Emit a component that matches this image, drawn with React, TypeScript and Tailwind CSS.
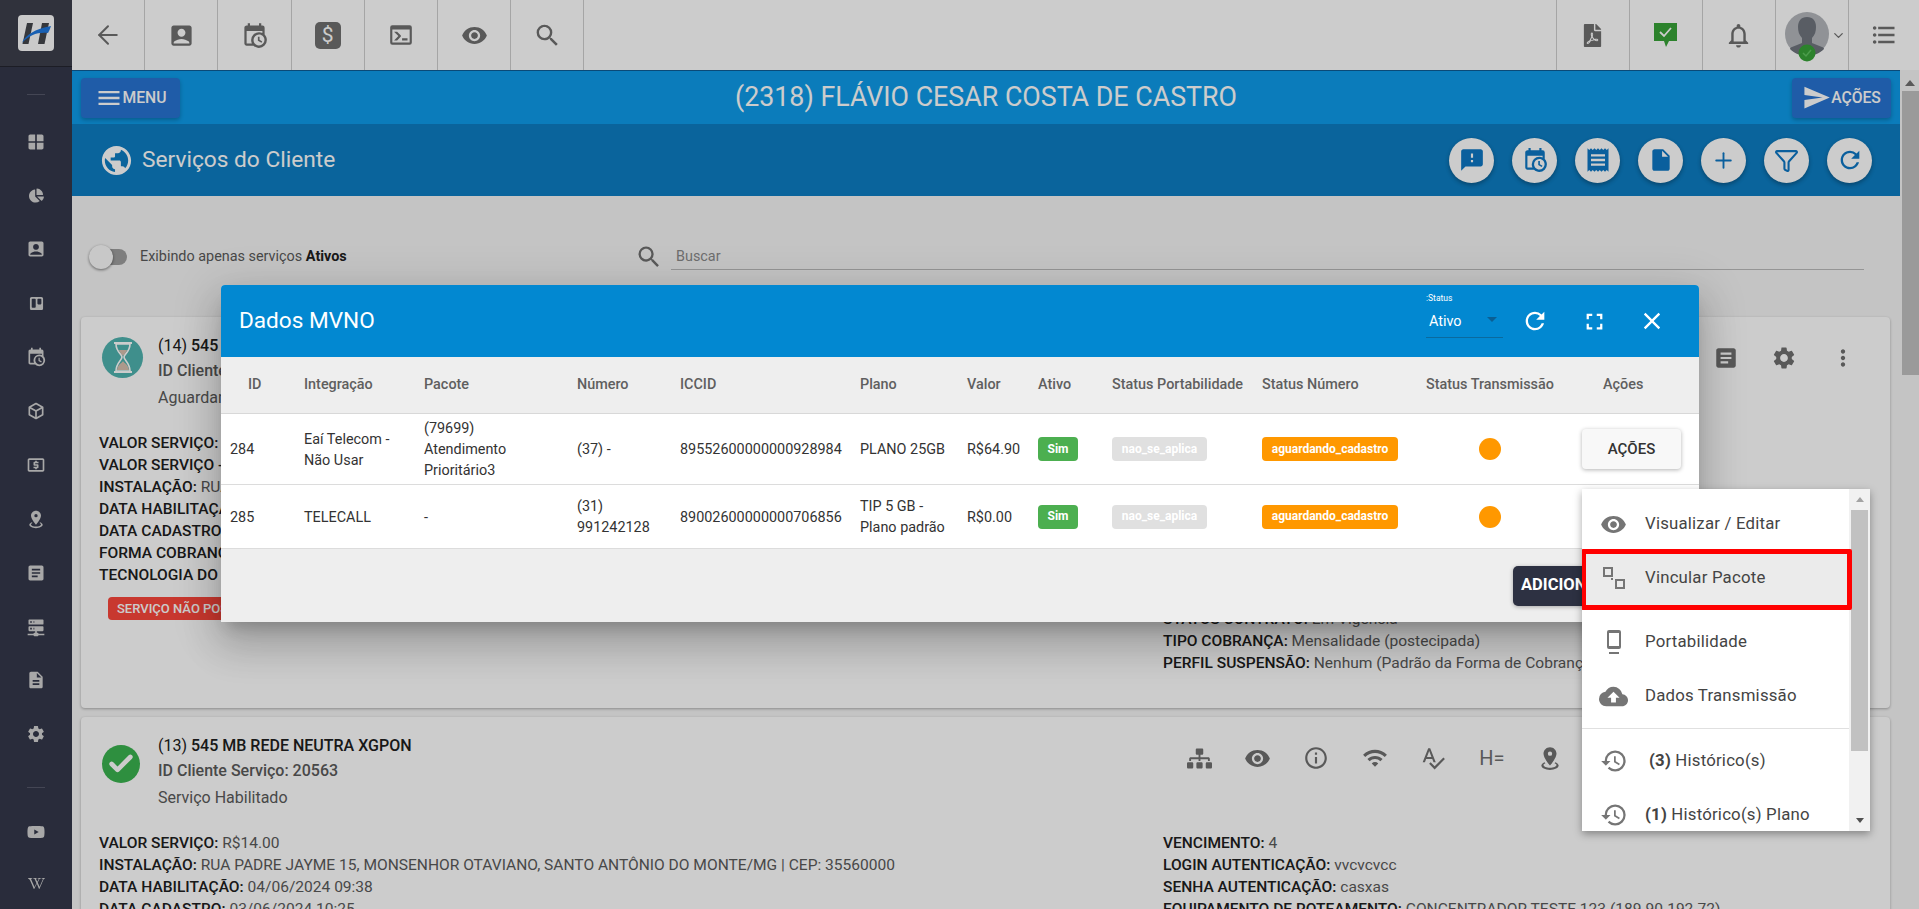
import type { ReactNode } from "react";
import { ArrowLeft, Check, ChevronDown, Filter, Plus } from "lucide-react";
import { FaChartPie, FaFilePdf, FaRegFolderOpen, FaSitemap, FaTrello, FaWikipediaW, FaYoutube } from "react-icons/fa";
import {
  MdAccountBox,
  MdArticle,
  MdClose,
  MdCloudUpload,
  MdDescription,
  MdFeedback,
  MdFormatListBulleted,
  MdFullscreen,
  MdHistory,
  MdInfoOutline,
  MdInsertDriveFile,
  MdLocalAtm,
  MdMenu,
  MdMoreVert,
  MdNotificationsNone,
  MdPublic,
  MdReceipt,
  MdRefresh,
  MdSearch,
  MdSend,
  MdSettings,
  MdSpellcheck,
  MdVisibility,
  MdWifi,
  MdWindow,
} from "react-icons/md";

const CALENDAR_CLOCK =
  "M15,13H16.5V15.82L18.94,17.23L18.19,18.53L15,16.69V13M19,8H5V19H9.67C9.24,18.09 9,17.07 9,16A7,7 0 0,1 16,9C17.07,9 18.09,9.24 19,9.67V8M5,21C3.89,21 3,20.1 3,19V5C3,3.89 3.89,3 5,3H6V1H8V3H16V1H18V3H19A2,2 0 0,1 21,5V11.1C22.24,12.36 23,14.09 23,16A7,7 0 0,1 16,23C14.09,23 12.36,22.24 11.1,21H5M16,11.15A4.85,4.85 0 0,0 11.15,16C11.15,18.68 13.32,20.85 16,20.85A4.85,4.85 0 0,0 20.85,16C20.85,13.32 18.68,11.15 16,11.15Z";
const MAP_RADIUS =
  "M12,2C15.31,2 18,4.66 18,7.95C18,12.41 12,19 12,19C12,19 6,12.41 6,7.95C6,4.66 8.69,2 12,2M12,6A2,2 0 0,0 10,8A2,2 0 0,0 12,10A2,2 0 0,0 14,8A2,2 0 0,0 12,6M20,19C20,21.21 16.42,23 12,23C7.58,23 4,21.21 4,19C4,17.71 5.22,16.56 7.11,15.83L7.75,16.74C6.67,17.19 6,17.81 6,18.5C6,19.88 8.69,21 12,21C15.31,21 18,19.88 18,18.5C18,17.81 17.33,17.19 16.25,16.74L16.89,15.83C18.78,16.56 20,17.71 20,19Z";
const CONSOLE =
  "M20,19V7H4V19H20M20,3A2,2 0 0,1 22,5V19A2,2 0 0,1 20,21H4A2,2 0 0,1 2,19V5A2,2 0 0,1 4,3H20M13,17V15H18V17H13M9.58,13L5.57,9H8.4L11.7,12.3C12.09,12.69 12.09,13.33 11.7,13.72L8.42,17H5.59L9.58,13Z";
const SERVER =
  "M13,19H14A1,1 0 0,1 15,20H22V22H15A1,1 0 0,1 14,23H10A1,1 0 0,1 9,22H2V20H9A1,1 0 0,1 10,19H11V17H4A1,1 0 0,1 3,16V12A1,1 0 0,1 4,11H20A1,1 0 0,1 21,12V16A1,1 0 0,1 20,17H13V19M4,3H20A1,1 0 0,1 21,4V8A1,1 0 0,1 20,9H4A1,1 0 0,1 3,8V4A1,1 0 0,1 4,3M9,7H10V5H9V7M9,15H10V13H9V15M5,5V7H7V5H5M5,13V15H7V13H5Z";
const CUBE =
  "M21,16.5C21,16.88 20.79,17.21 20.47,17.38L12.57,21.82C12.41,21.94 12.21,22 12,22C11.79,22 11.59,21.94 11.43,21.82L3.53,17.38C3.21,17.21 3,16.88 3,16.5V7.5C3,7.12 3.21,6.79 3.53,6.62L11.43,2.18C11.59,2.06 11.79,2 12,2C12.21,2 12.41,2.06 12.57,2.18L20.47,6.62C20.79,6.79 21,7.12 21,7.5V16.5M12,4.15L6.04,7.5L12,10.85L17.96,7.5L12,4.15M5,15.91L11,19.29V12.58L5,9.21V15.91M19,15.91V9.21L13,12.58V19.29L19,15.91Z";

function Mdi({ d, size = 24 }: { d: string; size?: number }) {
  return (
    <svg width={size} height={size} viewBox="0 0 24 24" fill="currentColor">
      <path d={d} />
    </svg>
  );
}

const SIDE_ICONS = [
  <MdWindow size={20} />,
  <FaChartPie size={15} />,
  <MdAccountBox size={20} />,
  <FaTrello size={15} />,
  <Mdi d={CALENDAR_CLOCK} size={20} />,
  <Mdi d={CUBE} size={20} />,
  <MdLocalAtm size={20} />,
  <Mdi d={MAP_RADIUS} size={20} />,
  <MdArticle size={20} />,
  <Mdi d={SERVER} size={20} />,
  <MdDescription size={20} />,
  <MdSettings size={20} />,
];

function Sidebar() {
  return (
    <aside className="flex w-[72px] shrink-0 flex-col items-center bg-[#34384a] text-[#d2d2d2]">
      <div className="flex h-[70px] w-full items-center justify-center border-b border-[#23252f] bg-[#3c3f4b]">
        <svg width="36" height="36" viewBox="0 0 36 36">
          <rect width="36" height="36" rx="4" fill="#fdfdfd" />
          <path d="M9 8h6l-4.5 21H4.5z" fill="#44464c" />
          <path d="M24 8h7l-4.5 21h-6.5z" fill="#44464c" />
          <path d="M4 28C7 20 17 14 33 11c-1 3-2 5-3 7-10-1-19 2-26 10z" fill="#1f78e0" />
        </svg>
      </div>
      <div className="mt-[27px] h-px w-[18px] bg-[#55586a]" />
      <div className="mt-[20px] flex w-full flex-col items-center">
        {SIDE_ICONS.map((icon, i) => (
          <div key={i} className="flex h-[53.9px] w-full items-center justify-center">
            {icon}
          </div>
        ))}
      </div>
      <div className="mt-[26px] h-px w-[18px] bg-[#55586a]" />
      <div className="mt-[18px] flex h-[54px] items-center justify-center">
        <FaYoutube size={18} />
      </div>
      <div className="flex h-[54px] items-center justify-center">
        <FaWikipediaW size={17} />
      </div>
    </aside>
  );
}

function ToolItem({ children }: { children: ReactNode }) {
  return (
    <div className="flex h-full w-[73.2px] items-center justify-center border-r border-[#cfcfcf] text-[#707070]">
      {children}
    </div>
  );
}

function Topbar() {
  return (
    <header className="flex h-[70px] shrink-0 items-center justify-between bg-white">
      <div className="flex h-full">
        <ToolItem>
          <ArrowLeft size={30} strokeWidth={1.6} />
        </ToolItem>
        <ToolItem>
          <MdAccountBox size={27} />
        </ToolItem>
        <ToolItem>
          <Mdi d={CALENDAR_CLOCK} size={27} />
        </ToolItem>
        <ToolItem>
          <div className="flex h-[27px] w-[26px] items-center justify-center rounded-[5px] bg-[#707070] text-[21px] leading-none text-white">
            $
          </div>
        </ToolItem>
        <ToolItem>
          <Mdi d={CONSOLE} size={26} />
        </ToolItem>
        <ToolItem>
          <MdVisibility size={27} />
        </ToolItem>
        <ToolItem>
          <MdSearch size={29} />
        </ToolItem>
      </div>
      <div className="flex h-full">
        <div className="flex h-full w-[74px] items-center justify-center border-x border-[#cfcfcf] text-[#707070]">
          <FaFilePdf size={23} />
        </div>
        <ToolItem>
          <svg width="23" height="24" viewBox="0 0 23 24">
            <path d="M0 0h23v18h-8l-3 6-2-6H0z" fill="#37a337" />
            <path d="M6 9l4 4 7-8" fill="none" stroke="#fff" strokeWidth="1.8" />
          </svg>
        </ToolItem>
        <ToolItem>
          <MdNotificationsNone size={29} />
        </ToolItem>
        <div className="relative flex h-full w-[73px] items-center border-r border-[#cfcfcf] pl-[8px] text-[#707070]">
          <svg width="46" height="50" viewBox="0 0 46 50" className="mt-[4px]">
            <circle cx="23" cy="22" r="22" fill="#b4b7bc" />
            <path
              d="M23 5c6 0 9 4 9 10 0 4-1 8-4 11v5l10 4c1 0 2 1 2 2-4 4-10 7-17 7s-13-3-17-7c0-1 1-2 2-2l10-4v-5c-3-3-4-7-4-11 0-6 3-10 9-10z"
              fill="#70757e"
            />
            <circle cx="23" cy="41" r="8.5" fill="#37a337" />
            <path d="M19 41l3 3 5-6" fill="none" stroke="#5fc45f" strokeWidth="1.5" />
          </svg>
          <ChevronDown size={15} className="ml-[1px]" />
        </div>
        <div className="flex h-full w-[70px] items-center justify-center text-[#707070]">
          <MdFormatListBulleted size={28} />
        </div>
      </div>
    </header>
  );
}

function HeaderButton({ icon, label }: { icon: ReactNode; label: string }) {
  return (
    <div className="flex h-10 w-[99px] items-center justify-center rounded bg-[#2774d2] text-[15.7px] font-medium text-white shadow-[0_2px_4px_rgba(0,0,0,0.25)]">
      {icon}
      {label}
    </div>
  );
}

function RoundButton({ children }: { children: ReactNode }) {
  return (
    <div className="flex h-[45px] w-[45px] items-center justify-center rounded-full bg-white text-[#0d77c5] shadow-[0_2px_4px_rgba(0,0,0,0.3)]">
      {children}
    </div>
  );
}

function Hero() {
  return (
    <>
      <div className="flex h-[54px] shrink-0 items-center justify-between border-t border-[#0d5d96] bg-[#0e9cea] px-[9px]">
        <HeaderButton icon={<MdMenu size={28} />} label="MENU" />
        <div className="text-[26.8px] text-white">(2318) FLÁVIO CESAR COSTA DE CASTRO</div>
        <HeaderButton icon={<MdSend size={29} />} label="AÇÕES" />
      </div>
      <div className="flex h-[72px] shrink-0 items-center justify-between bg-[#0d7dc3] pl-[27px] pr-[28px]">
        <div className="flex items-center gap-[8px] text-white">
          <MdPublic size={35} />
          <span className="text-[22.7px] leading-[30px]">Serviços do Cliente</span>
        </div>
        <div className="flex gap-[18px]">
          <RoundButton>
            <MdFeedback size={26} />
          </RoundButton>
          <RoundButton>
            <Mdi d={CALENDAR_CLOCK} size={26} />
          </RoundButton>
          <RoundButton>
            <MdReceipt size={28} />
          </RoundButton>
          <RoundButton>
            <MdInsertDriveFile size={26} />
          </RoundButton>
          <RoundButton>
            <Plus size={25} strokeWidth={1.8} />
          </RoundButton>
          <RoundButton>
            <Filter size={25} strokeWidth={2} />
          </RoundButton>
          <RoundButton>
            <MdRefresh size={28} />
          </RoundButton>
        </div>
      </div>
    </>
  );
}

function Line({ label, children }: { label: string; children?: ReactNode }) {
  return (
    <div className="whitespace-nowrap">
      <span className="font-medium text-[#202020]">{label}:</span> {children}
    </div>
  );
}

function CardIcons() {
  return (
    <div className="flex text-[#707070]">
      {[
        <FaSitemap size={25} />,
        <MdVisibility size={27} />,
        <MdInfoOutline size={26} />,
        <MdWifi size={26} />,
        <MdSpellcheck size={26} />,
        <span className="text-[20px]">H=</span>,
        <Mdi d={MAP_RADIUS} size={26} />,
        <MdFullscreen size={26} />,
        <FaRegFolderOpen size={22} />,
        <MdArticle size={26} />,
        <MdSettings size={26} />,
        <MdMoreVert size={26} />,
      ].map((icon, i) => (
        <div key={i} className="flex h-[40px] w-[58.5px] items-center justify-center">
          {icon}
        </div>
      ))}
    </div>
  );
}

function ServiceCard({
  icon,
  title,
  code,
  status,
  left,
  right,
  height,
}: {
  icon: ReactNode;
  title: ReactNode;
  code: string;
  status: string;
  left: ReactNode;
  right: ReactNode;
  height: string;
}) {
  return (
    <section
      className={`shrink-0 overflow-hidden rounded bg-white pl-[18px] pr-[18px] pt-[15px] shadow-[0_1px_3px_rgba(0,0,0,0.3)] ${height}`}
    >
      <div className="flex justify-between">
        <div className="flex items-start">
          <div className="flex w-[59px] justify-start pl-[3px]">{icon}</div>
          <div className="text-[16px] leading-[26px] text-[#5a5a5a]">
            <div className="pt-[2px] leading-[24px] text-[#202020]">{title}</div>
            <div className="font-medium">{code}</div>
            <div className="pt-[1px]">{status}</div>
          </div>
        </div>
        <div className="pt-[6px]">
          <CardIcons />
        </div>
      </div>
      <div className="mt-[21px] grid grid-cols-[1064px_1fr] text-[15.55px] leading-[22px] text-[#5a5a5a]">
        <div>{left}</div>
        <div>{right}</div>
      </div>
    </section>
  );
}

const TABLE_COLS =
  "grid grid-cols-[74px_120px_153px_103px_180px_107px_71px_74px_150px_164px_156px_1fr] items-center pl-[9px]";

function Badge({ color, width, label }: { color: string; width: string; label: string }) {
  return (
    <span
      className={`flex h-[24px] items-center justify-center rounded text-[12px] font-bold text-white ${color} ${width}`}
    >
      {label}
    </span>
  );
}

function TableRow({
  id,
  integracao,
  pacote,
  numero,
  iccid,
  plano,
  valor,
  height,
  action,
}: {
  id: string;
  integracao: ReactNode;
  pacote: ReactNode;
  numero: ReactNode;
  iccid: string;
  plano: ReactNode;
  valor: string;
  height: string;
  action?: boolean;
}) {
  return (
    <div className={`${TABLE_COLS} border-b border-[#dcdcdc] bg-white text-[14.4px] leading-[20.8px] text-[#333] ${height}`}>
      <div className="pt-[3px]">{id}</div>
      <div className="pt-[3px]">{integracao}</div>
      <div className="pt-[3px]">{pacote}</div>
      <div className="pt-[3px]">{numero}</div>
      <div className="pt-[3px]">{iccid}</div>
      <div className="pt-[3px]">{plano}</div>
      <div className="pt-[3px]">{valor}</div>
      <Badge color="bg-[#4caf50]" width="w-[40px]" label="Sim" />
      <Badge color="bg-[#e0e0e0]" width="w-[95px]" label="nao_se_aplica" />
      <Badge color="bg-[#ff9800]" width="w-[136px]" label="aguardando_cadastro" />
      <div className="flex w-[128px] justify-center">
        <span className="h-[22px] w-[22px] rounded-full bg-[#ff9800]" />
      </div>
      <div>
        {action && (
          <div className="flex h-10 w-[99px] items-center justify-center rounded bg-[#f8f8f8] text-[15px] font-medium text-[#333] shadow-[0_1px_4px_rgba(0,0,0,0.3)]">
            AÇÕES
          </div>
        )}
      </div>
    </div>
  );
}

function Modal() {
  return (
    <div className="absolute left-[221px] top-[285px] w-[1478px] overflow-hidden rounded-t bg-[#eeeeee] shadow-[0_11px_15px_-7px_rgba(0,0,0,0.2),0_24px_38px_3px_rgba(0,0,0,0.14),0_9px_46px_8px_rgba(0,0,0,0.12)]">
      <div className="flex h-[72px] items-center justify-between bg-[#0288d1] pl-[18px] pr-[32px] text-white">
        <div className="text-[22.6px]">Dados MVNO</div>
        <div className="flex items-center">
          <div className="-mt-[12px] w-[77px]">
            <div className="text-[8.5px] leading-[10px]">:Status</div>
            <div className="mt-[9px] flex h-[26px] items-start justify-between border-b border-[#0a6a9e] pl-[3px] pr-[6px] text-[14.4px] leading-[20px]">
              Ativo
              <span className="mt-[5px] h-0 w-0 border-x-[5px] border-t-[5px] border-x-transparent border-t-[#0a5f94]" />
            </div>
          </div>
          <div className="ml-[17px] flex w-[30px] justify-center">
            <MdRefresh size={28} />
          </div>
          <div className="ml-[29px] flex w-[30px] justify-center">
            <MdFullscreen size={27} />
          </div>
          <div className="ml-[28px] flex w-[30px] justify-center">
            <MdClose size={28} />
          </div>
        </div>
      </div>
      <div className={`${TABLE_COLS} h-[57px] border-b border-[#d8d8d8] text-[14.4px] font-medium text-[#5f5f5f]`}>
        <div className="pl-[18px]">ID</div>
        <div>Integração</div>
        <div>Pacote</div>
        <div>Número</div>
        <div>ICCID</div>
        <div>Plano</div>
        <div>Valor</div>
        <div>Ativo</div>
        <div>Status Portabilidade</div>
        <div>Status Número</div>
        <div>Status Transmissão</div>
        <div className="pl-[21px]">Ações</div>
      </div>
      <TableRow
        id="284"
        integracao={
          <>
            Eaí Telecom -<br />
            Não Usar
          </>
        }
        pacote={
          <>
            (79699)
            <br />
            Atendimento
            <br />
            Prioritário3
          </>
        }
        numero="(37) -"
        iccid="89552600000000928984"
        plano="PLANO 25GB"
        valor="R$64.90"
        height="h-[71px]"
        action
      />
      <TableRow
        id="285"
        integracao="TELECALL"
        pacote="-"
        numero={
          <>
            (31)
            <br />
            991242128
          </>
        }
        iccid="89002600000000706856"
        plano={
          <>
            TIP 5 GB -<br />
            Plano padrão
          </>
        }
        valor="R$0.00"
        height="h-[64px]"
      />
      <div className="flex h-[73px] items-center justify-end pr-[81px]">
        <div className="flex h-10 w-[105px] items-center whitespace-nowrap rounded-[5px] bg-[#2d3142] pl-[8px] text-[16.5px] font-bold text-white shadow-[0_1px_4px_rgba(0,0,0,0.3)]">
          ADICIONAR
        </div>
      </div>
    </div>
  );
}

function MenuItem({ icon, children, className = "" }: { icon: ReactNode; children: ReactNode; className?: string }) {
  return (
    <div className={`flex h-[54px] items-center text-[16.8px] tracking-[0.2px] text-[#444] ${className}`}>
      <div className="flex w-[63px] shrink-0 justify-center text-[#757575]">{icon}</div>
      {children}
    </div>
  );
}

function ActionsMenu() {
  return (
    <div className="absolute left-[1582px] top-[489px] flex h-[342px] w-[288px] overflow-hidden bg-white shadow-[0_3px_8px_rgba(0,0,0,0.35)]">
      <div className="w-[267px] pt-[8px]">
        <MenuItem icon={<MdVisibility size={27} />}>Visualizar / Editar</MenuItem>
        <MenuItem
          className="bg-[#ebebeb]"
          icon={
            <svg width="24" height="22" viewBox="0 0 24 22" fill="none" stroke="currentColor" strokeWidth="2">
              <rect x="2" y="1" width="8" height="8" />
              <rect x="14" y="13" width="8" height="8" />
              <rect x="9" y="11" width="2" height="2" fill="currentColor" stroke="none" />
            </svg>
          }
        >
          Vincular Pacote
        </MenuItem>
        <MenuItem
          className="mt-[10px]"
          icon={
            <svg width="14" height="24" viewBox="0 0 14 24" fill="currentColor">
              <path d="M2 0h10a2 2 0 0 1 2 2v15a2 2 0 0 1-2 2H2a2 2 0 0 1-2-2V2a2 2 0 0 1 2-2zm0 3v13h10V3z" fillRule="evenodd" />
              <rect x="2" y="22" width="10" height="2" />
            </svg>
          }
        >
          Portabilidade
        </MenuItem>
        <MenuItem icon={<MdCloudUpload size={29} />}>Dados Transmissão</MenuItem>
        <div className="mt-[5px] h-px bg-[#e0e0e0]" />
        <div className="mt-[5px]">
          <MenuItem icon={<MdHistory size={28} />}>
            <span className="ml-[4px]">
              <b className="font-bold">(3)</b> Histórico(s)
            </span>
          </MenuItem>
          <MenuItem icon={<MdHistory size={28} />}>
            <span>
              <b className="font-bold">(1)</b> Histórico(s) Plano
            </span>
          </MenuItem>
        </div>
      </div>
      <div className="flex w-[21px] flex-col items-center bg-[#f1f1f1] pt-[8px]">
        <span className="h-0 w-0 border-x-[4px] border-b-[5px] border-x-transparent border-b-[#a3a3a3]" />
        <div className="mt-[8px] h-[241px] w-[17px] bg-[#c1c1c1]" />
        <span className="mb-[8px] mt-auto h-0 w-0 border-x-[4px] border-t-[5px] border-x-transparent border-t-[#505050]" />
      </div>
      <div className="absolute left-[-1px] top-[60px] h-[61px] w-[271px] rounded-[2px] border-[5px] border-[#ff0000]" />
    </div>
  );
}

export default function App() {
  return (
    <div className="relative flex h-screen w-full overflow-hidden bg-[#f6f6f6] font-['Roboto',sans-serif]">
      <Sidebar />
      <div className="flex min-w-0 flex-1 flex-col">
        <Topbar />
        <div className="flex min-h-0 flex-1">
          <div className="flex min-w-0 flex-1 flex-col overflow-hidden">
            <Hero />
            <div className="mt-[48px] flex h-[26px] shrink-0 items-center pl-[19px] pr-[36px] text-[14.4px] text-[#5a5a5a]">
              <div className="relative h-[16px] w-[36px] rounded-full bg-[#9e9e9e]">
                <div className="absolute left-[-2px] top-[-4px] h-[24px] w-[24px] rounded-full bg-[#fafafa] shadow-[0_1px_3px_rgba(0,0,0,0.5)]" />
              </div>
              <span className="ml-[13px] w-[495px]">
                Exibindo apenas serviços <b className="font-bold text-[#202020]">Ativos</b>
              </span>
              <MdSearch size={28} className="text-[#707070]" />
              <div className="ml-[8px] h-[26px] flex-1 border-b border-[#bbb] pl-[5px] leading-[26px] text-[#8a8a8a]">
                Buscar
              </div>
            </div>
            <div className="mt-[47px] flex flex-col gap-[9px] pl-[9px] pr-[10px]">
              <ServiceCard
                height="h-[391px]"
                icon={
                  <div className="mt-[5px] flex h-[41px] w-[41px] items-center justify-center rounded-full bg-[#4fb3af]">
                    <svg width="22" height="31" viewBox="0 0 22 31">
                      <path d="M2 1h18M2 30h18" stroke="#fff" strokeWidth="2" />
                      <path d="M4 2c0 8 6 10 6 13S4 21 4 29h14c0-8-6-11-6-14s6-5 6-13z" fill="none" stroke="#fff" strokeWidth="1.6" />
                      <path d="M5 28c1-6 5-7 6-9 1 2 5 3 6 9z" fill="#d8c0ae" />
                      <path d="M7 8h8c-1 3-3 4-4 6-1-2-3-3-4-6z" fill="#d8c0ae" />
                    </svg>
                  </div>
                }
                title={
                  <>
                    (14) <span className="font-medium">545 MB REDE NEUTRA XGPON</span>
                  </>
                }
                code="ID Cliente Serviço: 20564"
                status="Aguardando Habilitação"
                left={
                  <>
                    <Line label="VALOR SERVIÇO">R$14.00</Line>
                    <Line label="VALOR SERVIÇO - ADICIONAIS">R$0.00</Line>
                    <Line label="INSTALAÇÃO">RUA PADRE JAYME 15</Line>
                    <Line label="DATA HABILITAÇÃO">-</Line>
                    <Line label="DATA CADASTRO">03/06/2024</Line>
                    <Line label="FORMA COBRANÇA">Boleto</Line>
                    <Line label="TECNOLOGIA DO SERVIÇO">GPON</Line>
                    <div className="ml-[9px] mt-[11px] flex h-[23px] w-[280px] items-center rounded bg-[#fb473b] pl-[9px] text-[13px] font-medium leading-none text-white">
                      SERVIÇO NÃO POSSUI CONTRATO
                    </div>
                  </>
                }
                right={
                  <>
                    <Line label="VENCIMENTO">4</Line>
                    <Line label="LOGIN AUTENTICAÇÃO">-</Line>
                    <Line label="SENHA AUTENTICAÇÃO">-</Line>
                    <Line label="EQUIPAMENTO DE ROTEAMENTO">-</Line>
                    <Line label="ENDEREÇO IP">-</Line>
                    <Line label="MAC">-</Line>
                    <Line label="VLAN">-</Line>
                    <Line label="PLANO">-</Line>
                    <Line label="STATUS CONTRATO">
                      <span className="text-[#5a5a5a]">Em Vigência</span>
                    </Line>
                    <Line label="TIPO COBRANÇA">Mensalidade (postecipada)</Line>
                    <Line label="PERFIL SUSPENSÃO">Nenhum (Padrão da Forma de Cobrança)</Line>
                  </>
                }
              />
              <ServiceCard
                height="h-[300px]"
                icon={
                  <div className="mt-[13px] flex h-[38px] w-[38px] items-center justify-center rounded-full bg-[#3ab34f] text-white">
                    <Check size={28} strokeWidth={4} />
                  </div>
                }
                title={
                  <>
                    (13) <span className="font-medium">545 MB REDE NEUTRA XGPON</span>
                  </>
                }
                code="ID Cliente Serviço: 20563"
                status="Serviço Habilitado"
                left={
                  <>
                    <Line label="VALOR SERVIÇO">R$14.00</Line>
                    <Line label="INSTALAÇÃO">
                      RUA PADRE JAYME 15, MONSENHOR OTAVIANO, SANTO ANTÔNIO DO MONTE/MG | CEP: 35560000
                    </Line>
                    <Line label="DATA HABILITAÇÃO">04/06/2024 09:38</Line>
                    <Line label="DATA CADASTRO">03/06/2024 10:25</Line>
                  </>
                }
                right={
                  <>
                    <Line label="VENCIMENTO">4</Line>
                    <Line label="LOGIN AUTENTICAÇÃO">vvcvcvcc</Line>
                    <Line label="SENHA AUTENTICAÇÃO">casxas</Line>
                    <Line label="EQUIPAMENTO DE ROTEAMENTO">CONCENTRADOR TESTE 123 (189.90.192.72)</Line>
                  </>
                }
              />
            </div>
          </div>
          <div className="flex w-[19px] shrink-0 flex-col items-center bg-[#f6f6f6] pt-[10px]">
            <span className="h-0 w-0 border-x-[5px] border-b-[6px] border-x-transparent border-b-[#707070]" />
            <div className="ml-[2px] mt-[5px] h-[284px] w-[17px] bg-[#c1c1c1]" />
          </div>
        </div>
      </div>
      <div className="absolute inset-0 bg-black/20" />
      <Modal />
      <ActionsMenu />
    </div>
  );
}
